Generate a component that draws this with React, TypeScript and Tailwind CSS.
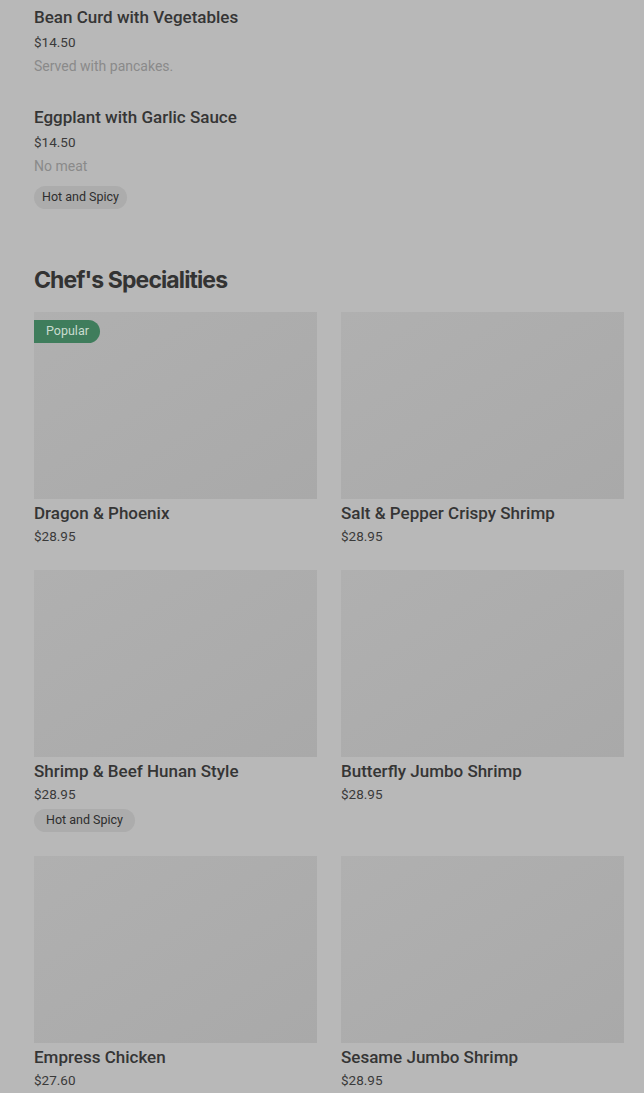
import React from "react";

type Dish = {
  name: string;
  price: string;
  tag?: string;
  popular?: boolean;
};

const specialities: Dish[] = [
  { name: "Dragon & Phoenix", price: "$28.95", popular: true },
  { name: "Salt & Pepper Crispy Shrimp", price: "$28.95" },
  { name: "Shrimp & Beef Hunan Style", price: "$28.95", tag: "Hot and Spicy" },
  { name: "Butterfly Jumbo Shrimp", price: "$28.95" },
  { name: "Empress Chicken", price: "$27.60" },
  { name: "Sesame Jumbo Shrimp", price: "$28.95" },
];

const Tag: React.FC<{ label: string; wide?: boolean }> = ({ label, wide }) => (
  <span
    className={`inline-flex items-center h-[23px] rounded-full bg-[#acacac] text-[12.5px] text-[#2e2e2e] ${
      wide ? "px-3" : "px-2"
    }`}
  >
    {label}
  </span>
);

const App: React.FC = () => {
  return (
    <div
      className="min-h-screen bg-[#b8b8b8] pl-[34px] pr-[20px] pt-[5px] pb-10 text-[#333333]"
      style={{ fontFamily: "Roboto, 'Liberation Sans', sans-serif" }}
    >
      {/* plain list items */}
      <div className="flex flex-col">
        <div>
          <p className="text-[17px] leading-6 font-medium text-[#353535]">Bean Curd with Vegetables</p>
          <p className="mt-[3px] text-[13.5px] leading-5 text-[#3a3a3a]">$14.50</p>
          <p className="mt-1 text-sm leading-5 text-[#8a8a8a]">Served with pancakes.</p>
        </div>
        <div className="mt-[29px]">
          <p className="text-[17px] leading-6 font-medium text-[#353535]">Eggplant with Garlic Sauce</p>
          <p className="mt-[3px] text-[13.5px] leading-5 text-[#3a3a3a]">$14.50</p>
          <p className="mt-1 text-sm leading-5 text-[#8a8a8a]">No meat</p>
          <div className="mt-2">
            <Tag label="Hot and Spicy" />
          </div>
        </div>
      </div>

      {/* Chef's specialities */}
      <h2
        className="mt-[55px] text-[23px] leading-8 font-bold tracking-[-0.9px] text-[#333333]"
        style={{ fontFamily: "Inter, 'Liberation Sans', sans-serif" }}
      >
        Chef's Specialities
      </h2>

      <div className="mt-[16px] grid grid-cols-2 gap-x-6 gap-y-6">
        {specialities.map((d) => (
          <div key={d.name} className="flex flex-col">
            <div className="relative h-[187px] bg-gradient-to-br from-[#b0b0b0] to-[#a9a9a9]">
              {d.popular && (
                <span className="absolute left-0 top-2 inline-flex items-center h-[23px] pl-3 pr-[11px] rounded-r-full bg-[#3f7d5c] text-[12.5px] text-[#c9dccf]">
                  Popular
                </span>
              )}
            </div>
            <p className="mt-[2px] text-[17px] leading-6 font-medium text-[#353535]">{d.name}</p>
            <p className="mt-[1px] text-[13.5px] leading-5 text-[#3a3a3a]">{d.price}</p>
            {d.tag && (
              <div className="mt-[3px]">
                <Tag label={d.tag} wide />
              </div>
            )}
          </div>
        ))}
      </div>
    </div>
  );
};

export default App;
